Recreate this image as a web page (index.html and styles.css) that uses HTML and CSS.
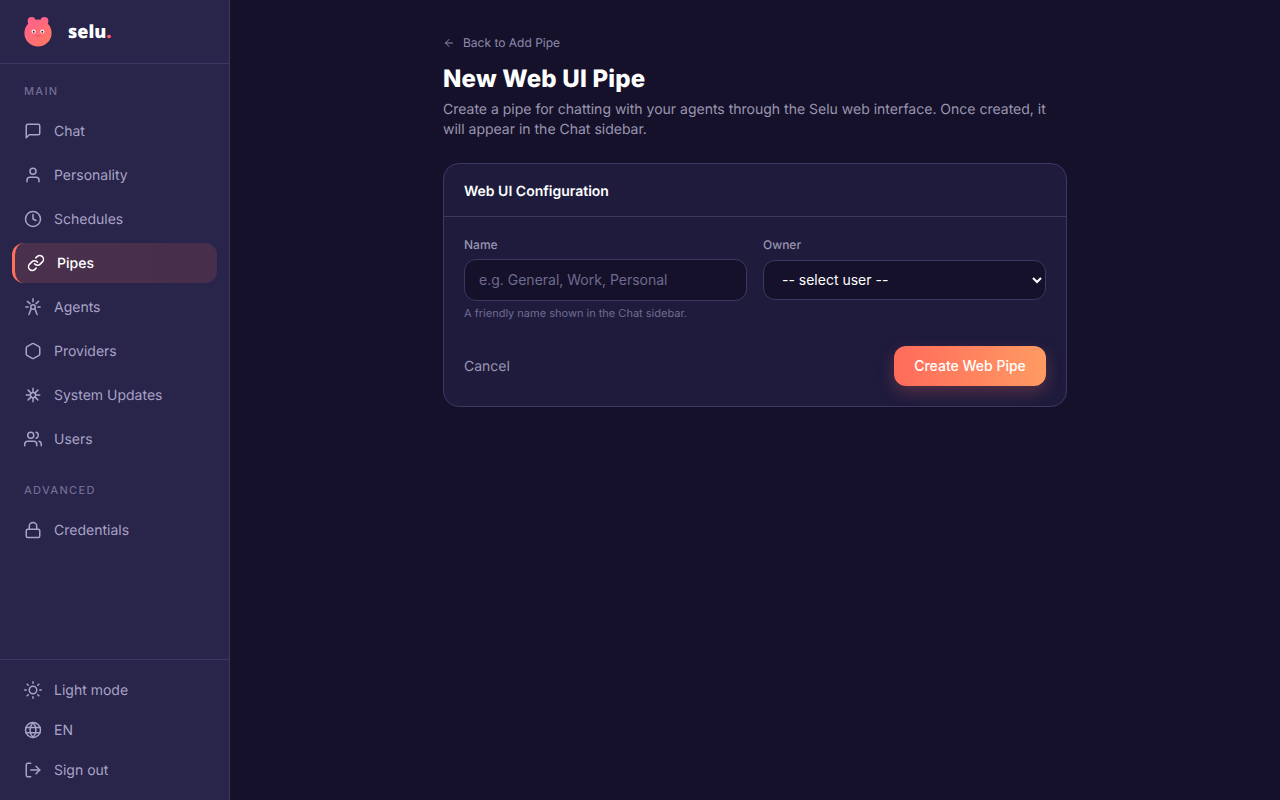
FILE: index.html
```html
<!DOCTYPE html>
<html lang="en">
<head>
<meta charset="utf-8">
<title>New Web UI Pipe</title>
<link rel="stylesheet" href="styles.css">
</head>
<body>
<div class="app">
  <aside class="sidebar">
    <div class="brand">
      <svg class="logo" viewBox="0 0 28 30" aria-hidden="true">
        <defs><linearGradient id="lg" x1="0" y1="0" x2="1" y2="1"><stop offset="0" stop-color="#ff5f8f"/><stop offset="1" stop-color="#ff7a5e"/></linearGradient></defs>
        <circle cx="7.6" cy="4" r="4" fill="#fb6488"/>
        <circle cx="20.4" cy="4" r="4" fill="#fb6488"/>
        <circle cx="14" cy="16" r="13.6" fill="url(#lg)"/>
        <circle cx="9.7" cy="14.5" r="2.1" fill="#fff" opacity=".9"/>
        <circle cx="18.3" cy="14.5" r="2.1" fill="#fff" opacity=".9"/>
        <circle cx="9.7" cy="14.7" r="1" fill="#3a2440"/>
        <circle cx="18.3" cy="14.7" r="1" fill="#3a2440"/>
        <path d="M11.5 18.4q2.5 1.6 5 0" stroke="#d8486a" stroke-width=".8" fill="none"/>
      </svg>
      <span class="wordmark">selu<span class="dot">.</span></span>
    </div>
    <nav class="nav">
      <div class="section">MAIN</div>
      <a class="item"><svg class="ic" viewBox="0 0 24 24"><path d="M21 15a2 2 0 0 1-2 2H7l-4 4V5a2 2 0 0 1 2-2h14a2 2 0 0 1 2 2z"/></svg>Chat</a>
      <a class="item"><svg class="ic" viewBox="0 0 24 24"><path d="M20 21v-2a4 4 0 0 0-4-4H8a4 4 0 0 0-4 4v2"/><circle cx="12" cy="7" r="4"/></svg>Personality</a>
      <a class="item"><svg class="ic" viewBox="0 0 24 24"><circle cx="12" cy="12" r="10"/><path d="M12 6v6l4 2"/></svg>Schedules</a>
      <a class="item active"><svg class="ic" viewBox="0 0 24 24"><path d="M10 13a5 5 0 0 0 7.54.54l3-3a5 5 0 0 0-7.07-7.07l-1.72 1.71"/><path d="M14 11a5 5 0 0 0-7.54-.54l-3 3a5 5 0 0 0 7.07 7.07l1.71-1.71"/></svg>Pipes</a>
      <a class="item"><svg class="ic" viewBox="0 0 24 24"><circle cx="12" cy="12" r="3"/><path d="M12 1v4M4.500 4.500l3.500 3M19.500 4.500l-3.500 3M2.500 12h3M18.500 12h3M9.500 14.500 6.500 22M14.500 14.500 17.500 22"/></svg>Agents</a>
      <a class="item"><svg class="ic" viewBox="0 0 24 24"><path d="M21 16V8a2 2 0 0 0-1-1.730l-7-4a2 2 0 0 0-2 0l-7 4A2 2 0 0 0 3 8v8a2 2 0 0 0 1 1.730l7 4a2 2 0 0 0 2 0l7-4A2 2 0 0 0 21 16z"/></svg>Providers</a>
      <a class="item"><svg class="ic" viewBox="0 0 24 24"><circle cx="12" cy="12" r="3.500"/><path d="M12 3v5M12 16v5M3 12h5M16 12h5M5.500 5.500l4 4M14.500 14.500l4 4M18.500 5.500l-4 4M9.500 14.500l-4 4"/></svg>System Updates</a>
      <a class="item"><svg class="ic" viewBox="0 0 24 24"><path d="M17 21v-2a4 4 0 0 0-4-4H5a4 4 0 0 0-4 4v2"/><circle cx="9" cy="7" r="4"/><path d="M23 21v-2a4 4 0 0 0-3-3.870"/><path d="M16 3.130a4 4 0 0 1 0 7.750"/></svg>Users</a>
      <div class="section">ADVANCED</div>
      <a class="item"><svg class="ic" viewBox="0 0 24 24"><rect x="3" y="11" width="18" height="11" rx="2" ry="2"/><path d="M7 11V7a5 5 0 0 1 10 0v4"/></svg>Credentials</a>
    </nav>
    <div class="foot">
      <a class="item"><svg class="ic" viewBox="0 0 24 24"><circle cx="12" cy="12" r="5"/><path d="M12 1v2M12 21v2M4.220 4.220l1.420 1.420M18.360 18.360l1.420 1.420M1 12h2M21 12h2M4.220 19.780l1.420-1.420M18.360 5.640l1.420-1.420"/></svg>Light mode</a>
      <a class="item"><svg class="ic" viewBox="0 0 24 24"><circle cx="12" cy="12" r="10"/><path d="M2.700 8.500h18.600M2.700 15.500h18.600M12 2a15.300 15.300 0 0 1 4 10 15.300 15.300 0 0 1-4 10 15.300 15.300 0 0 1-4-10 15.300 15.300 0 0 1 4-10z"/></svg>EN</a>
      <a class="item"><svg class="ic" viewBox="0 0 24 24"><path d="M9 21H5a2 2 0 0 1-2-2V5a2 2 0 0 1 2-2h4"/><path d="M16 17l5-5-5-5"/><path d="M21 12H9"/></svg>Sign out</a>
    </div>
  </aside>
  <main class="main">
    <div class="content">
      <a class="back"><svg class="back-ic" viewBox="0 0 24 24"><path d="M19 12H5"/><path d="M12 19l-7-7 7-7"/></svg>Back to Add Pipe</a>
      <h1 class="title">New Web UI Pipe</h1>
      <p class="lead">Create a pipe for chatting with your agents through the Selu web interface. Once created, it will appear in the Chat sidebar.</p>
      <section class="card">
        <header class="card-head">Web UI Configuration</header>
        <form class="card-body">
          <div class="fields">
            <div class="field">
              <label class="label" for="n">Name</label>
              <input class="input" id="n" placeholder="e.g. General, Work, Personal">
              <div class="hint">A friendly name shown in the Chat sidebar.</div>
            </div>
            <div class="field">
              <label class="label" for="o">Owner</label>
              <select class="select" id="o"><option>-- select user --</option></select>
            </div>
          </div>
          <div class="actions">
            <a class="cancel">Cancel</a>
            <button class="primary" type="button">Create Web Pipe</button>
          </div>
        </form>
      </section>
    </div>
  </main>
</div>
</body>
</html>
```
FILE: styles.css
```css
* { box-sizing: border-box; }
html, body { margin: 0; height: 100%; }
body { font-family: Inter, "Liberation Sans", sans-serif; background: #15112a; color: #fff; overflow: hidden; text-rendering: geometricPrecision; }
.app { display: flex; height: 800px; }
.sidebar { width: 230px; flex: none; display: flex; flex-direction: column; background: #28244a; border-right: 1px solid #3d3860; }
.brand { height: 64px; flex: none; display: flex; align-items: center; padding-left: 24px; gap: 16px; border-bottom: 1px solid #3d3860; }
.logo { width: 28px; height: 30px; display: block; flex: none; }
.wordmark { font-family: "Open Sans", sans-serif; font-weight: 800; font-size: 18px; color: #fff; }
.dot { color: #ff5a6e; }
.nav { flex: 1; padding: 0 12px; display: flex; flex-direction: column; gap: 4px; }
.section { font-size: 11px; font-weight: 500; letter-spacing: 1.32px; color: #716c90; height: 14px; line-height: 14px; margin: 20px 0 9px 12px; }
.item { display: flex; align-items: center; gap: 12px; height: 40px; padding-left: 12px; border-radius: 12px; font-size: 14px; line-height: 21px; color: #a8a3c7; }
.item.active { color: #fff; font-weight: 500; border-left: 3px solid #ff7059; background: linear-gradient(90deg, rgba(255,112,89,.16), rgba(255,112,89,.14)); }
.ic { width: 18px; height: 18px; flex: none; fill: none; stroke: currentColor; stroke-width: 2; stroke-linecap: round; stroke-linejoin: round; }
.foot { border-top: 1px solid #3d3860; padding: 10px 12px; }
.main { flex: 1; min-width: 0; }
.content { width: 624px; margin: 0 auto; padding-top: 34px; }
.back { display: flex; align-items: center; gap: 8px; height: 18px; font-size: 12px; line-height: 18px; color: #8f8aae; }
.back-ic { width: 12px; height: 12px; fill: none; stroke: currentColor; stroke-width: 2; stroke-linecap: round; stroke-linejoin: round; }
.title { margin: 11px 0 0; font-family: Inter, sans-serif; font-weight: 800; font-size: 24px; line-height: 32px; letter-spacing: .2px; color: #fff; }
.lead { margin: 5px 0 0; font-size: 14px; line-height: 20px; color: #9a96b0; }
.card { margin-top: 23px; border: 1px solid #3d3860; border-radius: 16px; background: #1e1b3d; }
.card-head { height: 53px; display: flex; align-items: center; padding: 2px 20px 0; font-size: 14px; font-weight: 600; color: #fff; border-bottom: 1px solid #3d3860; }
.card-body { padding: 20px; }
.fields { display: grid; grid-template-columns: 1fr 1fr; gap: 16px; }
.field { display: flex; flex-direction: column; align-items: stretch; }
.label { font-size: 12px; font-weight: 500; line-height: 16px; color: #9a96b0; margin-bottom: 6px; }
.input { height: 42px; padding: 0 14px 2px; border: 1px solid #3d3860; border-radius: 12px; background: #15112a; color: #fff; font: 14px/20px Inter, sans-serif; outline: none; }
.input::placeholder { color: #6f6a8e; opacity: 1; }
.select { height: 40px; margin-top: 1px; padding: 0 14px 2px; border: 1px solid #3d3860; border-radius: 12px; background: #15112a; color: #fff; font: 14px/20px Inter, sans-serif; outline: none; }
.hint { margin-top: 5px; font-size: 11px; line-height: 14px; color: #716c90; }
.actions { display: flex; justify-content: space-between; align-items: center; margin-top: 26px; }
.cancel { font-size: 14px; line-height: 21px; color: #9a96b0; }
.primary { height: 40px; width: 152px; padding: 0; border: 0; border-radius: 12px; background: linear-gradient(90deg, #ff6b5b, #ff9a62); color: #fff; font: 500 14px/20px Inter, sans-serif; box-shadow: 0 6px 16px rgba(255,107,91,.25); }
```
